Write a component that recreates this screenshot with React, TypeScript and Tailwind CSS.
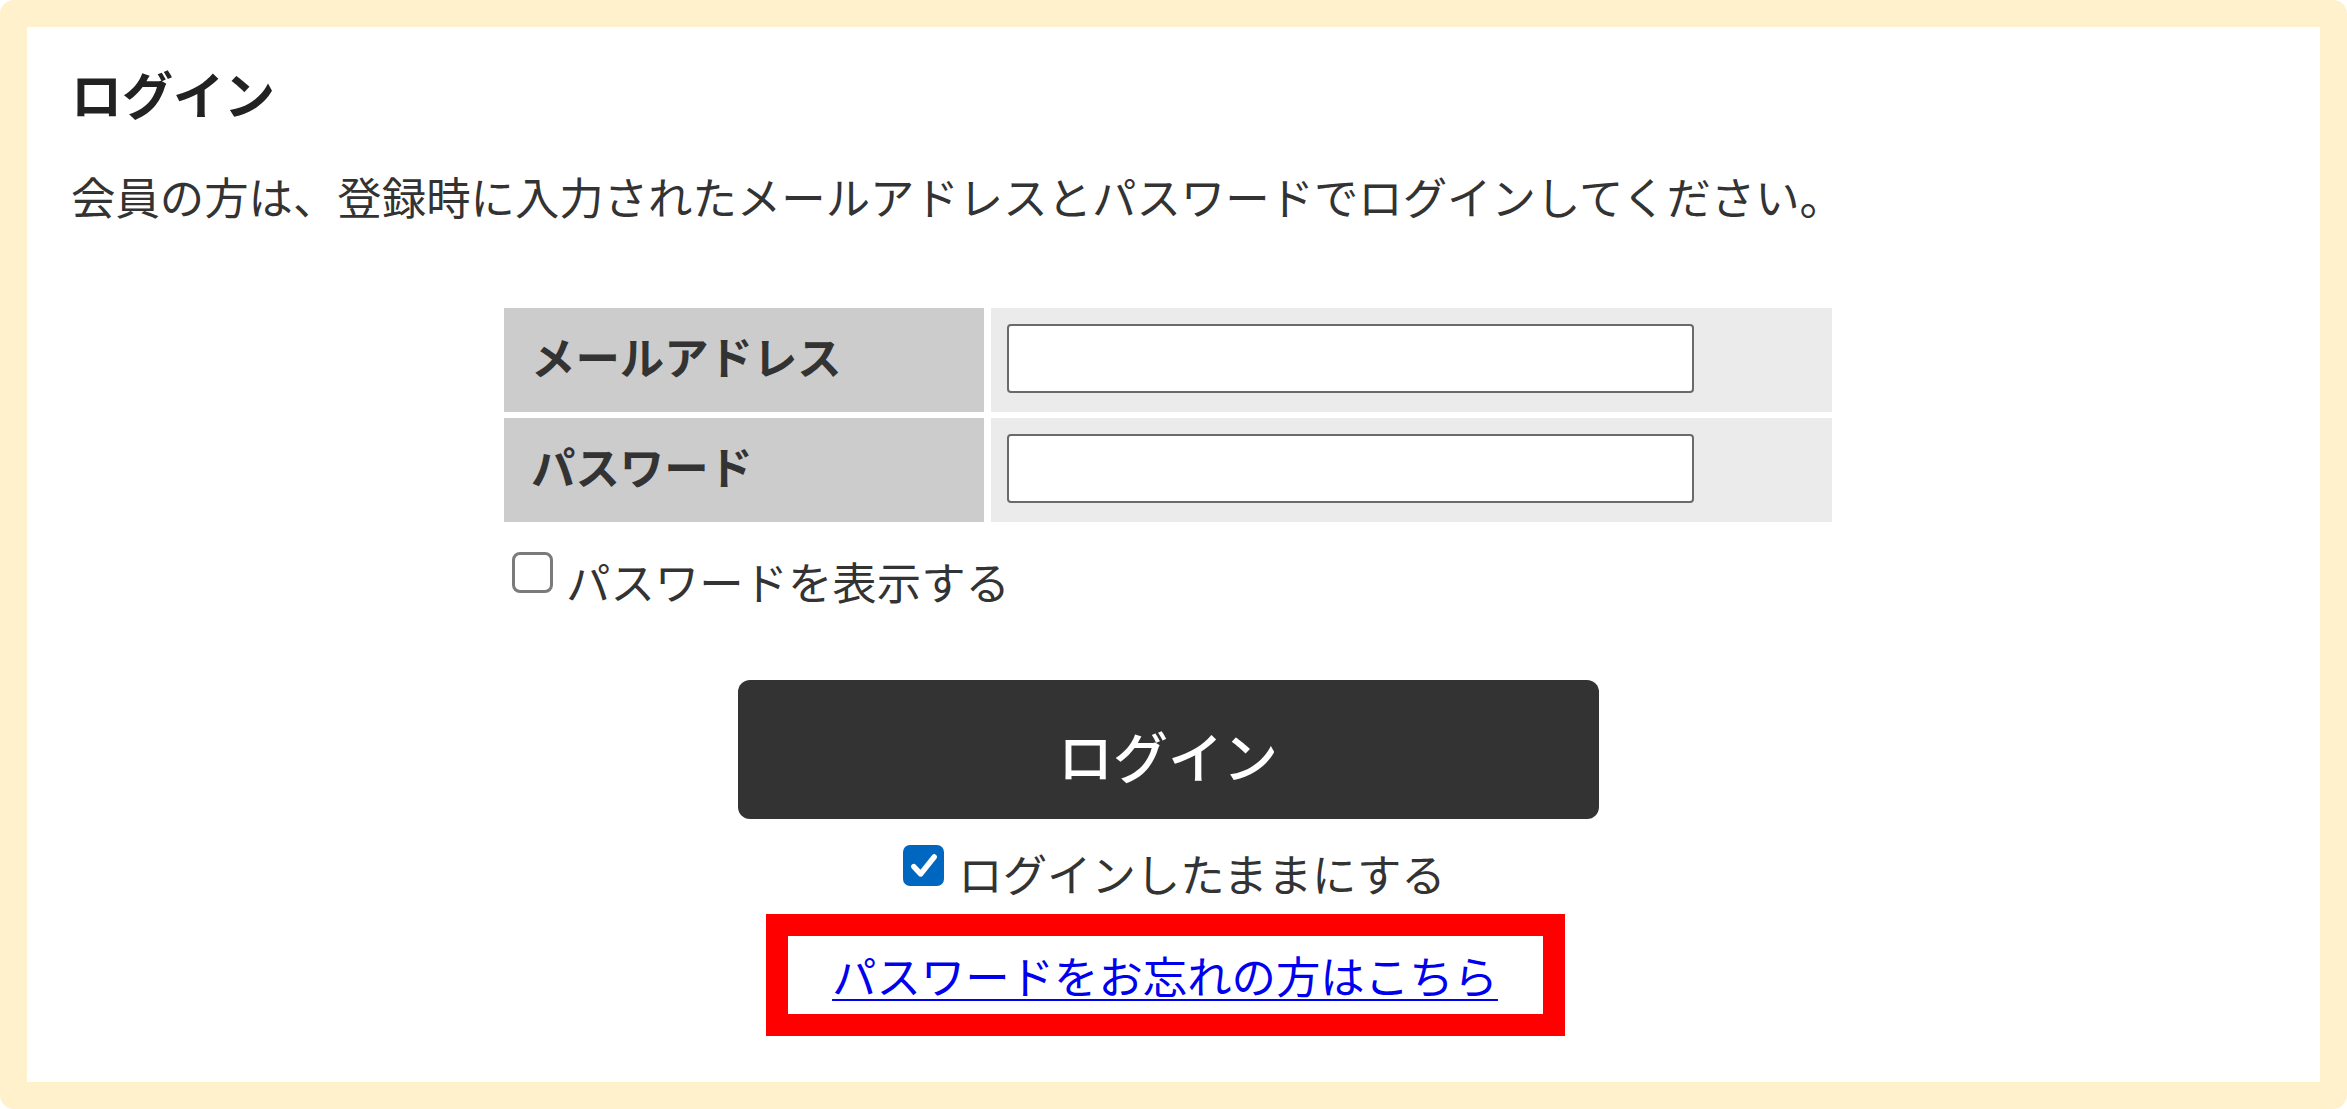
import { useState } from "react";

const FONT = "font-['Meiryo','Noto_Sans_CJK_JP',sans-serif]";

function Box({ checked, onClick }: { checked: boolean; onClick: () => void }) {
  if (checked) {
    return (
      <span
        onClick={onClick}
        className="flex h-[41px] w-[41px] shrink-0 items-center justify-center rounded-[7px] bg-[#0067c0]"
      >
        <svg width="34" height="34" viewBox="0 0 30 30" fill="none">
          <path
            d="M6 15.5 L12 22 L24 7"
            stroke="#fff"
            strokeWidth={4.8}
            strokeLinecap="round"
            strokeLinejoin="round"
          />
        </svg>
      </span>
    );
  }
  return (
    <span
      onClick={onClick}
      className="block h-[41px] w-[41px] shrink-0 rounded-[8px] border-[3px] border-[#7b7b7b] bg-white"
    />
  );
}

export default function App() {
  const [showPw, setShowPw] = useState(false);
  const [keep, setKeep] = useState(true);

  return (
    <div
      className={`${FONT} h-[1109px] w-[2347px] rounded-[14px] border-[27px] border-[#fff1cc] bg-white text-[#333]`}
    >
      <div className="pl-[44px] pt-[41px]">
        <h1 className="text-[51px] font-bold leading-[51px] text-[#222]">ログイン</h1>
        <p className="mt-[55px] text-[44.4px] leading-[44px]">
          会員の方は、登録時に入力されたメールアドレスとパスワードでログインしてください。
        </p>

        {/* form block */}
        <div className="ml-[433px] mt-[90px] w-[1328px]">
          <div className="grid grid-cols-[480px_841px] gap-x-[7px] gap-y-[6px]">
            <div className="flex h-[104px] items-center bg-[#cccccc] pb-[8px] pl-[27px] text-[44.4px] font-bold leading-[44px]">
              メールアドレス
            </div>
            <div className="flex h-[104px] items-center bg-[#ebebeb] pb-[3px] pl-[16px]">
              <input
                type="text"
                className="h-[69px] w-[687px] rounded-[4px] border-[2.5px] border-[#6a6a6a] bg-white px-3 text-[40px] outline-none"
              />
            </div>
            <div className="flex h-[104px] items-center bg-[#cccccc] pb-[8px] pl-[27px] text-[44.4px] font-bold leading-[44px]">
              パスワード
            </div>
            <div className="flex h-[104px] items-center bg-[#ebebeb] pb-[3px] pl-[16px]">
              <input
                type={showPw ? "text" : "password"}
                className="h-[69px] w-[687px] rounded-[4px] border-[2.5px] border-[#6a6a6a] bg-white px-3 text-[40px] outline-none"
              />
            </div>
          </div>

          <label className="mt-[30px] flex h-[52px] items-start pl-[8px]">
            <Box checked={showPw} onClick={() => setShowPw(!showPw)} />
            <span className="ml-[13px] mt-[7px] text-[44.4px] leading-[44px]">パスワードを表示する</span>
          </label>

          <button className="mx-auto mt-[76px] flex h-[139px] w-[861px] items-center justify-center rounded-[12px] bg-[#333333] pt-[10px] text-[55px] font-medium leading-none text-white">
            ログイン
          </button>

          <label className="ml-[13px] mt-[26px] flex items-start justify-center">
            <Box checked={keep} onClick={() => setKeep(!keep)} />
            <span className="ml-[14px] mt-[6px] text-[44.4px] leading-[44px]">ログインしたままにする</span>
          </label>

          <div className="mx-auto mt-[19px] flex h-[122px] w-[799px] -translate-x-[3px] items-center justify-center border-[22px] border-[#ff0000] bg-white">
            <a
              href="#"
              className="text-[44.4px] leading-[44px] text-[#0000ee] underline decoration-2 underline-offset-[5px]"
            >
              パスワードをお忘れの方はこちら
            </a>
          </div>
        </div>
      </div>
    </div>
  );
}
